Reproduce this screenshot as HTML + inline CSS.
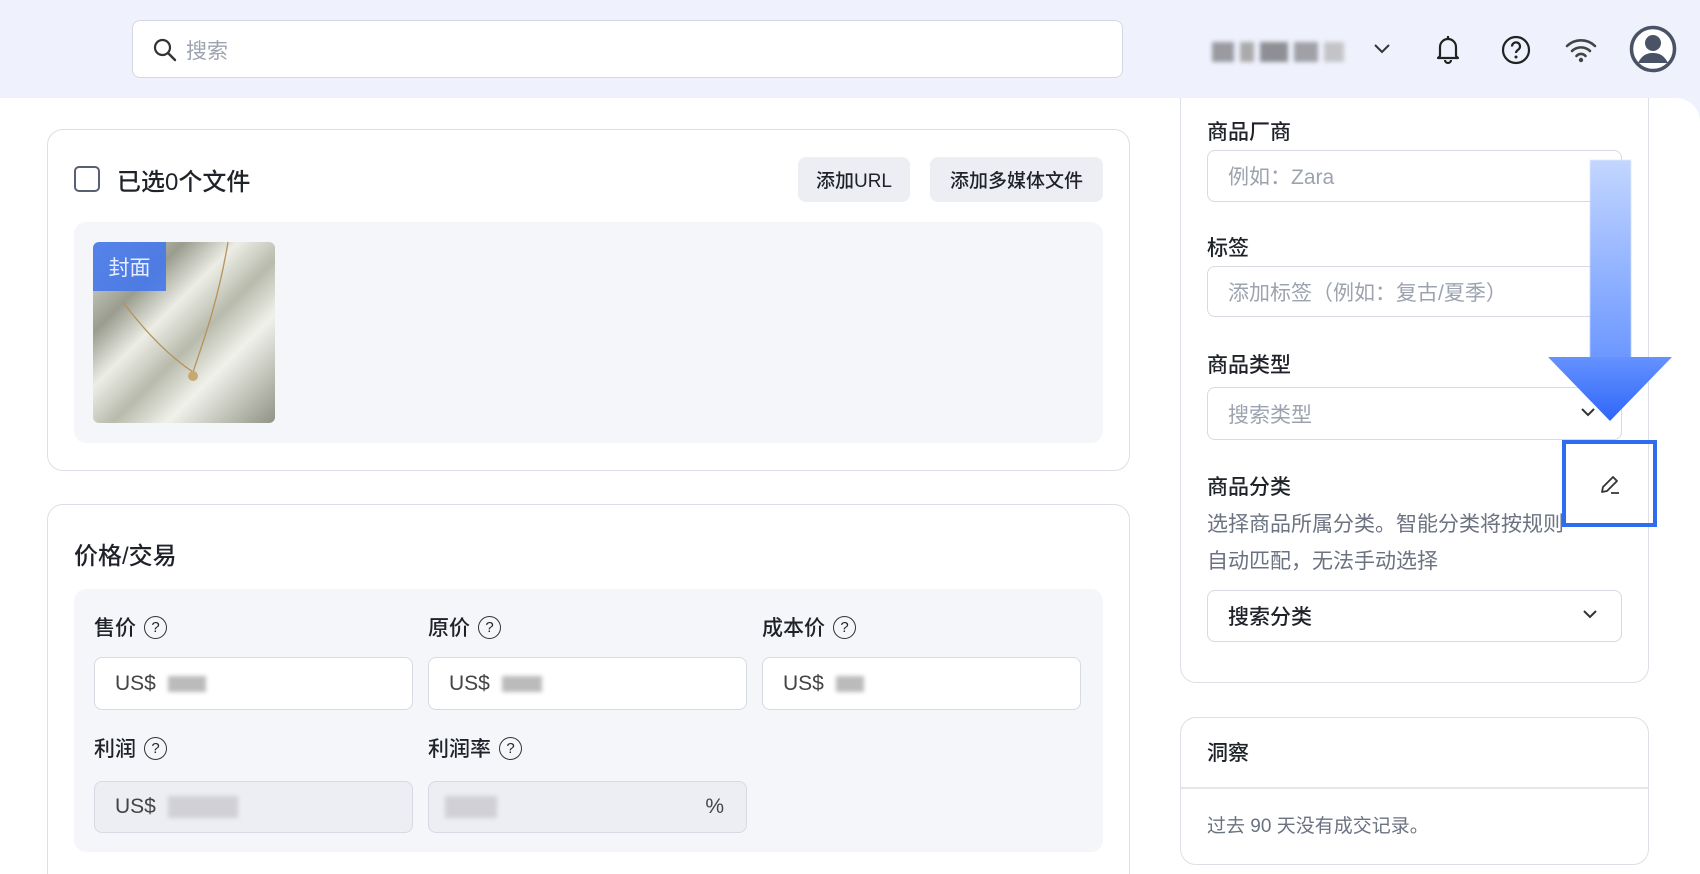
<!DOCTYPE html>
<html><head><meta charset="utf-8"><style>
*{box-sizing:border-box;margin:0;padding:0}
html,body{width:1700px;height:874px;overflow:hidden}
body{background:#eff2fd;font-family:"Liberation Sans","Noto Sans CJK SC",sans-serif;color:#1f2329;position:relative}
.abs{position:absolute}
.main{position:absolute;left:0;top:98px;width:1700px;height:776px;background:#fff;border-top-right-radius:24px}
.card{position:absolute;border:1.5px solid #dcdfe6;border-radius:16px;background:#fff}
.gray{position:absolute;background:#f5f6fa;border-radius:12px}
.inp{position:absolute;border:1.5px solid #d7dae2;border-radius:8px;background:#fff;font-size:21px;color:#9ca3af;padding-left:20px;display:flex;align-items:center}
.lbl{position:absolute;font-size:21px;font-weight:500;color:#1f2329;display:flex;align-items:center;gap:8px}
.q{width:23px;height:23px;border:1.8px solid #333;border-radius:50%;font-size:15px;display:inline-flex;align-items:center;justify-content:center;font-weight:500}
.blur{display:inline-block;background:#c8c8cc;filter:blur(2px)}
.btn{position:absolute;background:#eceef3;border-radius:8px;font-size:19px;font-weight:500;display:flex;align-items:center;justify-content:center}
</style></head><body>
<div class="abs" style="left:132px;top:20px;width:991px;height:58px;background:#fff;border:1.5px solid #d5d8e2;border-radius:8px"></div>
<svg class="abs" style="left:152px;top:37px" width="26" height="26" viewBox="0 0 26 26"><circle cx="10.5" cy="10.5" r="7.5" fill="none" stroke="#333" stroke-width="2.2"/><path d="M16 16l7 7" stroke="#333" stroke-width="2.4" stroke-linecap="round"/></svg>
<div class="abs" style="left:186px;top:35px;font-size:21px;color:#9ca3af">搜索</div>
<div class="abs" style="left:1212px;top:38px;width:143px;height:28px;display:flex;gap:6px;align-items:center">
<span class="blur" style="width:22px;height:20px;background:#9a9aa0"></span><span class="blur" style="width:14px;height:20px;background:#aaa"></span><span class="blur" style="width:28px;height:20px;background:#8e8e94"></span><span class="blur" style="width:24px;height:20px;background:#a0a0a6"></span><span class="blur" style="width:20px;height:20px;background:#c4c4c8"></span></div>
<svg class="abs" style="left:1372px;top:40px" width="20" height="18"><path d="M3 5l7 7 7-7" fill="none" stroke="#333" stroke-width="2"/></svg>
<svg class="abs" style="left:1434px;top:33px" width="28" height="32" viewBox="0 0 28 32"><path d="M6 23V14a8 8 0 0116 0v9l2 2H4z" fill="none" stroke="#222" stroke-width="2.2" stroke-linejoin="round"/><path d="M11 27a3 3 0 006 0" fill="none" stroke="#222" stroke-width="2.2"/><path d="M14 3v3" stroke="#222" stroke-width="2.2"/></svg>
<svg class="abs" style="left:1500px;top:34px" width="32" height="32"><circle cx="16" cy="16" r="13" fill="none" stroke="#222" stroke-width="2.2"/><path d="M12 12.5a4 4 0 117 2.5c-1.5 1.2-3 2-3 4" fill="none" stroke="#222" stroke-width="2.2"/><circle cx="16" cy="23" r="1.5" fill="#222"/></svg>
<svg class="abs" style="left:1564px;top:36px" width="34" height="28"><path d="M3 10a20 20 0 0128 0M8 15a13 13 0 0118 0M12.5 20a6 6 0 019 0" fill="none" stroke="#444" stroke-width="2.6" stroke-linecap="round"/><circle cx="17" cy="24" r="2.2" fill="#444"/></svg>
<svg class="abs" style="left:1629px;top:25px" width="48" height="48"><circle cx="24" cy="24" r="21.5" fill="#fff" stroke="#4a5266" stroke-width="3.5"/><circle cx="24" cy="18" r="8" fill="#4a5266"/><path d="M9 38c4-8 9-10 15-10s11 2 15 10" fill="#4a5266"/></svg>
<div class="main"></div>
<div class="card" style="left:47px;top:129px;width:1083px;height:342px"></div>
<div class="abs" style="left:74px;top:166px;width:26px;height:26px;border:2.5px solid #5a6072;border-radius:5px"></div>
<div class="abs" style="left:117px;top:162px;font-size:24px;font-weight:500">已选0个文件</div>
<div class="btn" style="left:798px;top:157px;width:112px;height:45px">添加URL</div>
<div class="btn" style="left:930px;top:157px;width:173px;height:45px">添加多媒体文件</div>
<div class="gray" style="left:74px;top:222px;width:1029px;height:221px"></div>
<div class="abs" style="left:93px;top:242px;width:182px;height:181px;border-radius:6px;overflow:hidden;background:linear-gradient(135deg,#e6e8df 0%,#9a9c8e 25%,#eceee6 40%,#b8baac 55%,#f0f1ea 70%,#8f9284 100%)">
<svg class="abs" style="left:0;top:0" width="182" height="181"><path d="M135 0C125 60 110 100 100 130M30 60C60 100 85 120 100 130" fill="none" stroke="#b8925a" stroke-width="1.3"/><circle cx="100" cy="134" r="5" fill="#c9a870"/></svg>
<div class="abs" style="left:0;top:0;width:73px;height:49px;background:rgba(70,120,235,.9);color:#e8eeff;font-size:21px;display:flex;align-items:center;justify-content:center">封面</div></div>
<div class="card" style="left:47px;top:504px;width:1083px;height:390px"></div>
<div class="abs" style="left:74px;top:536px;font-size:24px;font-weight:500">价格/交易</div>
<div class="gray" style="left:74px;top:589px;width:1029px;height:263px"></div>
<div class="lbl" style="left:94px;top:612px">售价 <span class="q">?</span></div>
<div class="lbl" style="left:428px;top:612px">原价 <span class="q">?</span></div>
<div class="lbl" style="left:762px;top:612px">成本价 <span class="q">?</span></div>
<div class="inp" style="left:94px;top:657px;width:319px;height:53px;color:#444">US$&nbsp;&nbsp;<span class="blur" style="width:38px;height:16px;background:#bbb"></span></div>
<div class="inp" style="left:428px;top:657px;width:319px;height:53px;color:#444">US$&nbsp;&nbsp;<span class="blur" style="width:40px;height:16px;background:#bbb"></span></div>
<div class="inp" style="left:762px;top:657px;width:319px;height:53px;color:#444">US$&nbsp;&nbsp;<span class="blur" style="width:28px;height:16px;background:#bbb"></span></div>
<div class="lbl" style="left:94px;top:733px">利润 <span class="q">?</span></div>
<div class="lbl" style="left:428px;top:733px">利润率 <span class="q">?</span></div>
<div class="inp" style="left:94px;top:781px;width:319px;height:52px;background:#eceef3;color:#444">US$&nbsp;&nbsp;<span class="blur" style="width:70px;height:22px;background:#d0d0d6"></span></div>
<div class="inp" style="left:428px;top:781px;width:319px;height:52px;background:#eceef3;color:#444;padding-left:16px"><span class="blur" style="width:52px;height:22px;background:#d0d0d6"></span><span style="margin-left:auto;margin-right:22px">%</span></div>
<div class="abs" style="left:1180px;top:98px;width:469px;height:585px;border:1.5px solid #dcdfe6;border-top:none;border-radius:0 0 16px 16px;background:#fff"></div>
<div class="lbl" style="left:1207px;top:116px">商品厂商</div>
<div class="inp" style="left:1207px;top:150px;width:415px;height:52px">例如：Zara</div>
<div class="lbl" style="left:1207px;top:232px">标签</div>
<div class="inp" style="left:1207px;top:266px;width:415px;height:51px">添加标签（例如：复古/夏季）</div>
<div class="lbl" style="left:1207px;top:349px">商品类型</div>
<div class="inp" style="left:1207px;top:387px;width:415px;height:53px">搜索类型</div>
<div class="lbl" style="left:1207px;top:471px">商品分类</div>
<svg class="abs" style="left:1598px;top:473px" width="24" height="24"><path d="M4 19l1-5L15 4l4 4L9 18zM13 20h8" fill="none" stroke="#333" stroke-width="1.8" stroke-linejoin="round"/></svg>
<div class="abs" style="left:1207px;top:506px;font-size:21px;color:#6b7280;line-height:37px;width:420px">选择商品所属分类。智能分类将按规则<br>自动匹配，无法手动选择</div>
<div class="inp" style="left:1207px;top:590px;width:415px;height:52px;color:#1f2329;font-weight:500">搜索分类</div>
<svg class="abs" style="left:1580px;top:607px" width="20" height="16"><path d="M4 4l6 6 6-6" fill="none" stroke="#333" stroke-width="2"/></svg>
<svg class="abs" style="left:1578px;top:405px" width="20" height="16"><path d="M4 4l6 6 6-6" fill="none" stroke="#333" stroke-width="2"/></svg>
<div class="abs" style="left:1590px;top:160px;width:41px;height:200px;background:linear-gradient(#c3d6ff,#6b97ff);filter:blur(.6px)"></div>
<svg class="abs" style="left:1548px;top:357px" width="124" height="64"><defs><linearGradient id="g" x1="0" y1="0" x2="0" y2="1"><stop offset="0" stop-color="#6592ff"/><stop offset="1" stop-color="#2f66f8"/></linearGradient></defs><path d="M0 0H124L62 64z" fill="url(#g)"/></svg>
<div class="abs" style="left:1562px;top:440px;width:95px;height:87px;border:4px solid #2f6cf0"></div>
<div class="card" style="left:1180px;top:717px;width:469px;height:148px"></div>
<div class="abs" style="left:1180px;top:787px;width:469px;height:1.5px;background:#e3e5ea"></div>
<div class="lbl" style="left:1207px;top:737px">洞察</div>
<div class="abs" style="left:1207px;top:811px;font-size:19px;color:#6b7280">过去 90 天没有成交记录。</div>
</body></html>
